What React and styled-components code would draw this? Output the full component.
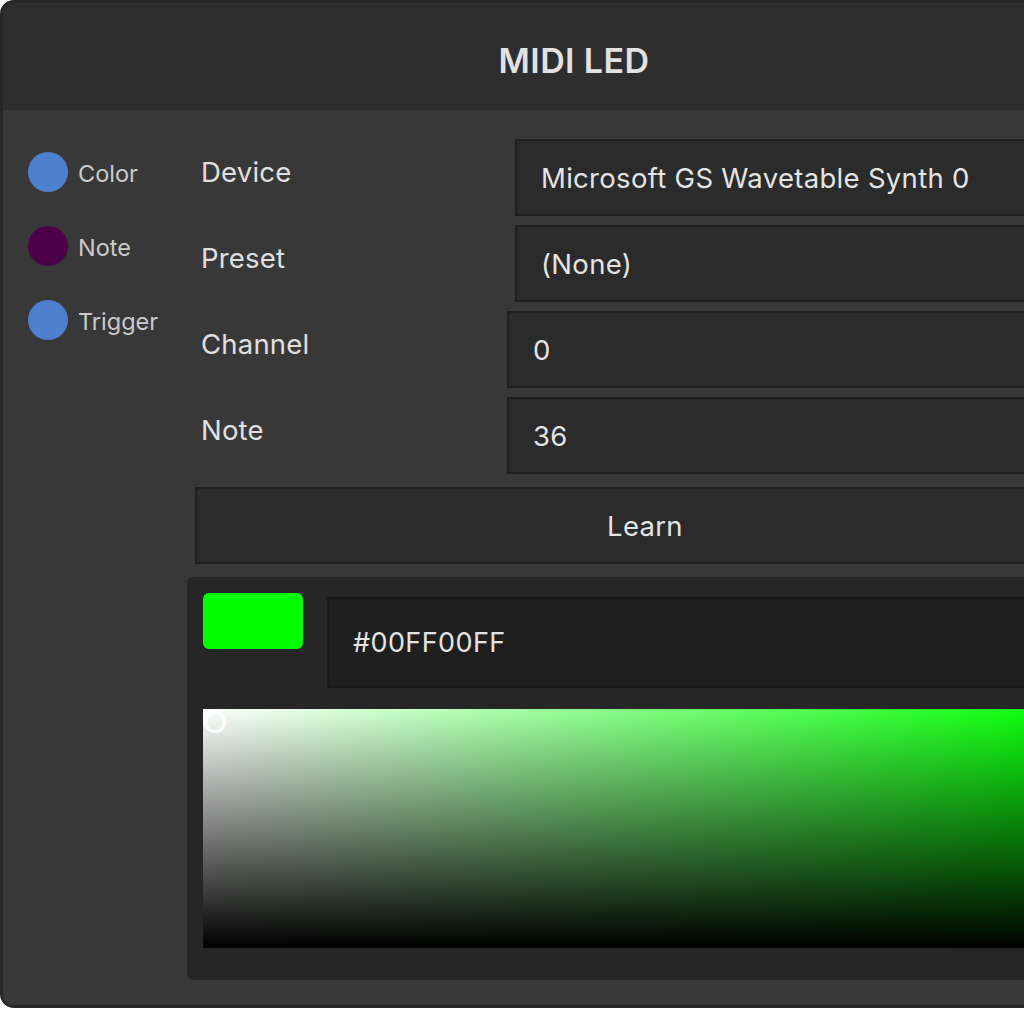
import React from 'react';
import styled, { createGlobalStyle } from 'styled-components';

const GlobalStyle = createGlobalStyle`
  html, body {
    margin: 0;
    padding: 0;
    background: #ffffff;
    overflow: hidden;
  }
  body {
    font-family: Inter, "Noto Sans", "Liberation Sans", sans-serif;
  }
`;

const sideItems = [
  { label: 'Color', color: '#4f80cf' },
  { label: 'Note', color: '#4b0047' },
  { label: 'Trigger', color: '#4f80cf' },
];

const fields = [
  { label: 'Device', value: 'Microsoft GS Wavetable Synth 0', offset: 314 },
  { label: 'Preset', value: '(None)', offset: 314 },
  { label: 'Channel', value: '0', offset: 306 },
  { label: 'Note', value: '36', offset: 306 },
];

const App = () => {
  return (
    <>
      <GlobalStyle />
      <Window>
        <Header>MIDI LED</Header>
        <Body>
          <Sidebar>
            {sideItems.map(item => (
              <SideItem key={item.label}>
                <Dot color={item.color} />
                <SideLabel>{item.label}</SideLabel>
              </SideItem>
            ))}
          </Sidebar>
          <Main>
            {fields.map(field => (
              <FieldRow key={field.label} offset={field.offset}>
                <FieldLabel>{field.label}</FieldLabel>
                <Input>{field.value}</Input>
              </FieldRow>
            ))}
            <LearnButton>Learn</LearnButton>
            <PickerPanel>
              <PickerTop>
                <Swatch />
                <HexInput>#00FF00FF</HexInput>
              </PickerTop>
              <SatValArea>
                <Marker />
              </SatValArea>
            </PickerPanel>
          </Main>
        </Body>
      </Window>
    </>
  );
};

export default App;

const Window = styled.div`
  width: 1142px;
  height: 1002px;
  border: 3px solid #272727;
  border-radius: 14px;
  overflow: hidden;
  display: flex;
  flex-direction: column;
  background: #383838;
`;

const Header = styled.div`
  height: 107px;
  flex-shrink: 0;
  box-sizing: border-box;
  padding-top: 7px;
  background: #2e2e2e;
  display: flex;
  align-items: center;
  justify-content: center;
  color: #e2e2e2;
  font-size: 34px;
  font-weight: 600;
  letter-spacing: 0.4px;
`;

const Body = styled.div`
  flex: 1;
  display: flex;
  background: #383838;
`;

const Sidebar = styled.div`
  width: 184px;
  flex-shrink: 0;
  padding: 42px 0 0 25px;
  box-sizing: border-box;
  display: flex;
  flex-direction: column;
  gap: 34px;
`;

const SideItem = styled.div`
  display: flex;
  align-items: center;
  gap: 10px;
  height: 40px;
`;

const Dot = styled.div`
  width: 40px;
  height: 40px;
  border-radius: 50%;
  background: ${p => p.color};
  flex-shrink: 0;
`;

const SideLabel = styled.span`
  color: #cbcbcb;
  font-size: 23.5px;
  margin-top: 2px;
`;

const Main = styled.div`
  flex: 1;
  display: flex;
  flex-direction: column;
  padding: 29px 50px 0 0;
`;

const FieldRow = styled.div`
  display: grid;
  grid-template-columns: ${p => p.offset}px 1fr;
  padding-left: 14px;
  margin-bottom: 9px;
`;

const FieldLabel = styled.div`
  color: #e0e0e0;
  font-size: 27.5px;
  line-height: 32px;
  padding-top: 17px;
  letter-spacing: 0.2px;
`;

const Input = styled.div`
  height: 73px;
  background: #2b2b2b;
  border: 2px solid #1f1f1f;
  display: flex;
  align-items: center;
  padding-left: 24px;
  color: #e4e4e4;
  font-size: 27.5px;
  letter-spacing: 0.3px;
`;

const LearnButton = styled.div`
  margin: 4px 0 0 8px;
  height: 73px;
  background: #2b2b2b;
  border: 2px solid #1f1f1f;
  display: flex;
  align-items: center;
  justify-content: center;
  color: #e4e4e4;
  font-size: 27.5px;
  letter-spacing: 0.3px;
`;

const PickerPanel = styled.div`
  margin-top: 13px;
  background: #262626;
  border-radius: 6px;
  padding: 16px 16px 32px;
  display: flex;
  flex-direction: column;
  gap: 21px;
`;

const PickerTop = styled.div`
  display: flex;
  align-items: flex-start;
  gap: 24px;
`;

const Swatch = styled.div`
  width: 100px;
  height: 56px;
  border-radius: 6px;
  background: #00ff00;
  flex-shrink: 0;
`;

const HexInput = styled.div`
  flex: 1;
  margin-top: 4px;
  height: 87px;
  background: #1f1f1f;
  border: 2px solid #191919;
  display: flex;
  align-items: center;
  padding-left: 24px;
  color: #e4e4e4;
  font-size: 27px;
  letter-spacing: 0.4px;
`;

const SatValArea = styled.div`
  position: relative;
  height: 239px;
  background: linear-gradient(to bottom, rgba(0, 0, 0, 0), #000000),
    linear-gradient(to right, #ffffff, #00ff00);
`;

const Marker = styled.div`
  position: absolute;
  left: 1px;
  top: 2px;
  width: 16px;
  height: 16px;
  border: 3px solid #ffffff;
  border-radius: 50%;
`;
